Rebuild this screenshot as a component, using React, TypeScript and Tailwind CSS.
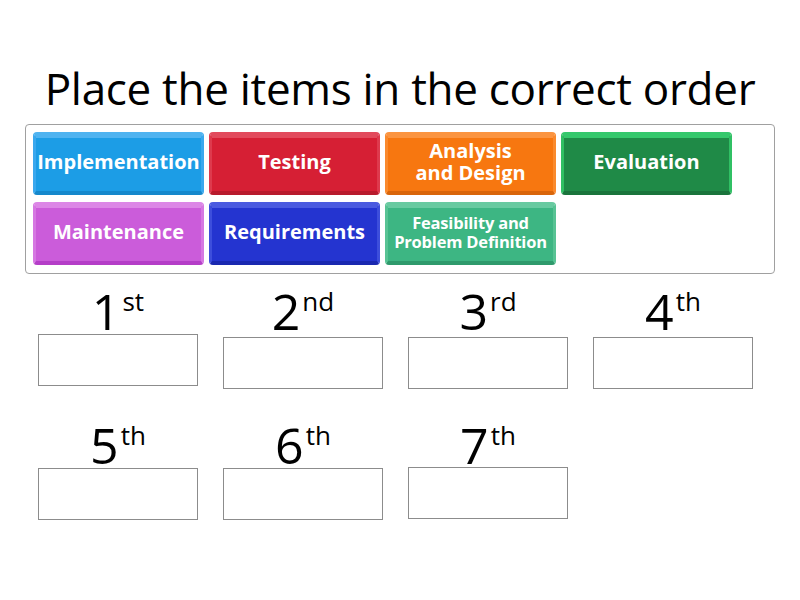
import React from "react";

type Tile = { label: string[]; top: string; side: string; bottom: string; fill: string; size: string };

const tiles: Tile[] = [
  { label: ["Implementation"], top: "border-t-[#4fb3f0]", side: "border-x-[#3aa8ee]", bottom: "border-b-[#1588cc]", fill: "bg-[#1c9de6]", size: "text-[20px] leading-[23px]" },
  { label: ["Testing"], top: "border-t-[#e24a5c]", side: "border-x-[#de3a4d]", bottom: "border-b-[#b81a2c]", fill: "bg-[#d61f34]", size: "text-[20px] leading-[23px]" },
  { label: ["Analysis", "and Design"], top: "border-t-[#fb9440]", side: "border-x-[#fa8a2e]", bottom: "border-b-[#d9650a]", fill: "bg-[#f77710]", size: "text-[20px] leading-[22px]" },
  { label: ["Evaluation"], top: "border-t-[#35c86c]", side: "border-x-[#30c064]", bottom: "border-b-[#1a743c]", fill: "bg-[#1f8a47]", size: "text-[20px] leading-[23px]" },
  { label: ["Maintenance"], top: "border-t-[#dc86e6]", side: "border-x-[#d678e2]", bottom: "border-b-[#b53ec8]", fill: "bg-[#cb5cda]", size: "text-[20px] leading-[23px]" },
  { label: ["Requirements"], top: "border-t-[#4a5ae0]", side: "border-x-[#3d4edc]", bottom: "border-b-[#1a28b0]", fill: "bg-[#2434d0]", size: "text-[20px] leading-[23px]" },
  { label: ["Feasibility and", "Problem Definition"], top: "border-t-[#68caa0]", side: "border-x-[#58c394]", bottom: "border-b-[#2f9a6c]", fill: "bg-[#3db683]", size: "text-[16.5px] leading-[19px] tracking-[-0.2px]" },
];

const slots: [string, string, string][] = [
  ["1", "st", "mt-0"],
  ["2", "nd", "mt-[3px]"],
  ["3", "rd", "mt-[3px]"],
  ["4", "th", "mt-[3px]"],
  ["5", "th", "mt-0"],
  ["6", "th", "mt-0"],
  ["7", "th", "mt-[-1px]"],
];

function TileBox({ t }: { t: Tile }) {
  return (
    <div
      className={`flex h-[63px] w-[171px] items-center justify-center rounded-[4px] border-t-[6px] border-x-[3px] border-b-[4px] ${t.top} ${t.side} ${t.bottom} ${t.fill}`}
    >
      <p className={`-mt-[6px] whitespace-nowrap text-center font-bold text-white ${t.size}`}>
        {t.label.map((l, i) => (
          <React.Fragment key={l}>
            {i > 0 && <br />}
            {l}
          </React.Fragment>
        ))}
      </p>
    </div>
  );
}

function Slot({ n, suf, off }: { n: string; suf: string; off: string }) {
  return (
    <div className="flex w-[160px] flex-col items-center">
      <div className="flex h-[46px] items-start leading-none text-black">
        <span className="text-[50px] leading-[46px]">{n}</span>
        <span className="ml-[2px] text-[26px] leading-[26px]">{suf}</span>
      </div>
      <div className={`h-[52px] w-[160px] border border-[#8c8c8c] bg-white ${off}`} />
    </div>
  );
}

export default function App() {
  return (
    <div className="h-[600px] w-[800px] bg-white font-['Open_Sans',sans-serif]">
      <h1 className="pt-[60px] text-center text-[44px] leading-[57px] tracking-[-0.3px] text-black">
        Place the items in the correct order
      </h1>
      <div className="mx-[25px] mt-[7px] h-[150px] rounded-[4px] border border-[#a0a0a0] px-[7px] pt-[7px]">
        <div className="grid grid-cols-[repeat(4,171px)] gap-x-[5px] gap-y-[7px]">
          {tiles.map((t) => (
            <TileBox key={t.label.join(" ")} t={t} />
          ))}
        </div>
      </div>
      <div className="ml-[38px] mt-[14px] grid grid-cols-[repeat(4,160px)] gap-x-[25px] gap-y-[33px]">
        {slots.map(([n, s, o]) => (
          <Slot key={n} n={n} suf={s} off={o} />
        ))}
      </div>
    </div>
  );
}
